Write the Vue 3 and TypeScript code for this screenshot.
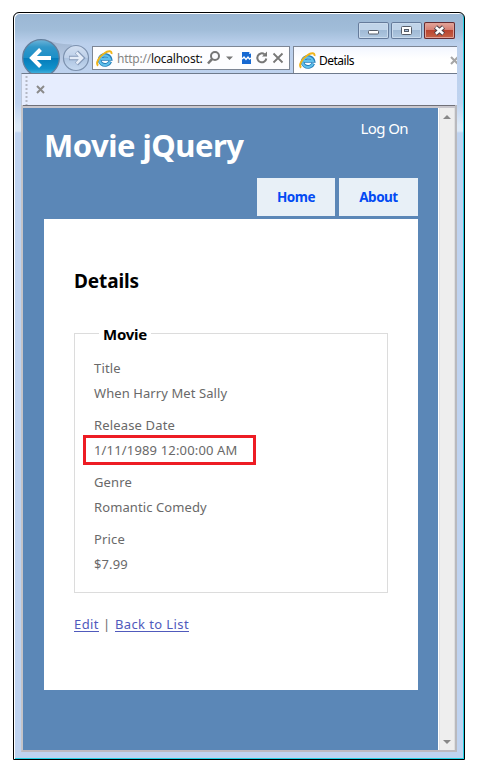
<script setup lang="ts">
interface Field {
  label: string
  value: string
  key: string
}

const fields: Field[] = [
  { key: 'title', label: 'Title', value: 'When Harry Met Sally' },
  { key: 'date', label: 'Release Date', value: '1/11/1989 12:00:00 AM' },
  { key: 'genre', label: 'Genre', value: 'Romantic Comedy' },
  { key: 'price', label: 'Price', value: '$7.99' },
]
const menu: string[] = ['Home', 'About']
</script>

<template>
  <div class="window">
    <div class="caption">
      <span class="cap-btn">
        <svg width="31" height="17"><rect x="10.5" y="8.5" width="10" height="3.5" rx="1" fill="#fff" stroke="#555c68" /></svg>
      </span>
      <span class="cap-btn">
        <svg width="31" height="17"><rect x="10.5" y="4.500" width="10" height="8" rx="1" fill="#fff" stroke="#555c68" /><rect x="13.500" y="7.500" width="4" height="2" fill="#a9bfdb" stroke="#555c68" /></svg>
      </span>
      <span class="cap-btn close">
        <svg width="31" height="17"><path d="M11.500 5l8 7M19.500 5l-8 7" stroke="#4b4048" stroke-width="4.600" /><path d="M11.800 5.300l7.400 6.400M19.200 5.300l-7.400 6.400" stroke="#fff" stroke-width="2.500" /></svg>
      </span>
    </div>

    <div class="navbar">
      <svg class="nav-buttons" width="71" height="36" viewBox="0 0 71 36">
        <defs>
          <linearGradient id="back" x1="0" y1="0" x2="0" y2="1">
            <stop offset="0" stop-color="#6db3d8" />
            <stop offset=".2" stop-color="#3197c9" />
            <stop offset=".5" stop-color="#1c8fc7" />
            <stop offset=".51" stop-color="#057cba" />
            <stop offset=".8" stop-color="#1192cb" />
            <stop offset="1" stop-color="#65c4e8" />
          </linearGradient>
          <linearGradient id="fwd" x1="0" y1="0" x2="0" y2="1">
            <stop offset="0" stop-color="#d2dff1" />
            <stop offset=".5" stop-color="#bed0e9" />
            <stop offset=".51" stop-color="#adc4e1" />
            <stop offset="1" stop-color="#c7daf1" />
          </linearGradient>
          <linearGradient id="bridge" x1="0" y1="0" x2="0" y2="1">
            <stop offset="0" stop-color="#9fb5d0" />
            <stop offset="1" stop-color="#bfd0ea" />
          </linearGradient>
        </defs>
        <path d="M24 2q10 5 27 5.500l-6 20H30z" fill="url(#bridge)" />
        <circle cx="20" cy="21" r="18.300" fill="url(#back)" stroke="#647f9d" stroke-width="1.300" />
        <path d="M30 21H11.500M19.500 12.500L11 21l8.500 8.500" fill="none" stroke="#fff" stroke-width="4" />
        <circle cx="55" cy="21" r="12.500" fill="url(#fwd)" stroke="#7c91ae" stroke-width="1.200" />
        <path d="M48 21h13M55.500 15l6 6-6 6" fill="none" stroke="#8499b8" stroke-width="4.400" />
        <path d="M48.700 21h12M55.500 15.500l5.500 5.500-5.500 5.500" fill="none" stroke="#e4ecf8" stroke-width="2.600" />
      </svg>
      <div class="address">
        <svg class="ie" width="17" height="17" viewBox="0 0 17 17">
          <path d="M14.300 11.500A5.500 5 0 1 1 14.500 9H5" fill="none" stroke="#247db9" stroke-width="3.600" />
          <path d="M14 11.500A5.300 4.800 0 1 1 14 9H5" fill="none" stroke="#5fc0ec" stroke-width="2.100" />
          <path d="M2.200 15.600C-.8 13.500 3 6.800 8 3.500c4-2.900 8-3.200 7.500.5" fill="none" stroke="#efb41a" stroke-width="1.900" />
        </svg>
        <span class="url"><i>http://</i>localhost:</span>
        <svg class="tools" width="80" height="18" viewBox="0 0 80 18">
          <g fill="none" stroke="#777" stroke-width="2">
            <circle cx="8" cy="7" r="4" />
            <path d="M5 10.200L1 14.500" stroke-width="2.500" />
            <path d="M57.500 5.200A4.500 4.500 0 1 0 59.300 9.500" />
            <path d="M66.500 4.500l9 9M75.500 4.500l-9 9" stroke-width="1.800" />
          </g>
          <path d="M60 2.500v5h-5zM19 7.500h7l-3.500 3.500z" fill="#777" />
          <path d="M35 3h7l2 2v10h-9z" fill="#1769d2" />
          <path d="M42 3v2h2z" fill="#b6d7ff" />
          <path d="M35 10l2-2 2 2.500 2-2.500 1.500 2L44 9" fill="none" stroke="#fff" stroke-width="1.300" />
        </svg>
      </div>
      <div class="tab">
        <svg class="ie" width="17" height="17" viewBox="0 0 17 17">
          <path d="M14.300 11.500A5.500 5 0 1 1 14.500 9H5" fill="none" stroke="#247db9" stroke-width="3.600" />
          <path d="M14 11.500A5.300 4.800 0 1 1 14 9H5" fill="none" stroke="#5fc0ec" stroke-width="2.100" />
          <path d="M2.200 15.600C-.8 13.500 3 6.800 8 3.500c4-2.900 8-3.200 7.500.5" fill="none" stroke="#efb41a" stroke-width="1.900" />
        </svg>
        <span class="tab-title">Details</span>
        <svg class="tab-close" width="7" height="9"><path d="M1 1l7 7M8 1L1 8" stroke="#a5a5a5" stroke-width="2" /></svg>
      </div>
    </div>

    <div class="toolbar">
      <svg width="30" height="31">
        <path d="M4.500 2v29" stroke="#b4b8c4" stroke-width="2" stroke-dasharray="2 2" />
        <path d="M15 12l7 7M22 12l-7 7" stroke="#8b8b8b" stroke-width="2" />
      </svg>
    </div>

    <div class="viewport">
      <div class="page">
        <header>
          <h1>Movie jQuery</h1>
          <a class="logon">Log On</a>
        </header>
        <nav>
          <a v-for="item in menu" :key="item">{{ item }}</a>
        </nav>
        <main>
          <h2>Details</h2>
          <section class="fieldset">
            <h3>Movie</h3>
            <dl>
              <template v-for="field in fields" :key="field.key">
                <dt>{{ field.label }}</dt>
                <dd :class="[field.key, { marked: field.key === 'date' }]">{{ field.value }}</dd>
              </template>
            </dl>
          </section>
          <p class="links"><a>Edit</a><span>|</span><a>Back to List</a></p>
        </main>
      </div>
      <div class="scrollbar">
        <svg width="16" height="10"><path d="M4 7l4-4 4 4z" fill="#888" /></svg>
        <svg width="16" height="10"><path d="M4 3h8l-4 4z" fill="#888" /></svg>
      </div>
    </div>
  </div>
</template>

<style>
body {
  background: #fff;
}
</style>

<style scoped>
* {
  box-sizing: border-box;
}
svg {
  display: block;
  flex: none;
}
.window {
  width: 452px;
  height: 748px;
  margin: 12px 0 0 13px;
  border: 1px solid #000;
  border-radius: 6px 6px 0 0;
  padding: 0 7px 6px 7px;
  background: linear-gradient(#9ab6d3 0, #a1bdd9 17px, #bbd0ec 31px, #bfd3f0 90px, #dce9f7 112px, #dce9f7 118px, #bfd3f0 120px);
  box-shadow: inset 1px 1px #fff, inset -1px -1px #22d0e4;
  font-family: "Noto Sans", sans-serif;
  white-space: nowrap;
}
.caption {
  height: 24px;
  padding: 9px 2px 0 0;
  display: flex;
  justify-content: flex-end;
  gap: 2px;
}
.cap-btn {
  width: 31px;
  height: 17px;
  border-radius: 2px;
  background: linear-gradient(#c0d4e9 0 45%, #9fb9d5 47%, #b2cae2);
  box-shadow: inset 0 0 0 1px #657b9b, inset 0 0 0 2px #cadbed;
}
.close {
  background: linear-gradient(#e4aaa0 0, #d68074 45%, #b9432f 48%, #c86749);
  box-shadow: inset 0 0 0 1px #622b32, inset 0 0 0 2px #e0a196;
}
.navbar {
  height: 36px;
  display: flex;
  align-items: flex-start;
}
.address {
  width: 198px;
  height: 24px;
  margin-top: 9px;
  border: 1px solid #7d8695;
  background: #fdfdff;
  display: flex;
  align-items: center;
}
.address .ie {
  margin-left: 3px;
}
.url {
  flex: none;
  width: 86px;
  margin-left: 4px;
  font-size: 12px;
  letter-spacing: -0.24px;
  color: #111;
}
.url i {
  color: #858585;
  font-style: normal;
}
.tools {
  margin-left: 4px;
}
.tab {
  flex: 1;
  height: 27px;
  margin: 9px 0 0 3px;
  border: 1px solid #7d8695;
  border-right: 0;
  border-bottom: 0;
  background: linear-gradient(#f2f6ff, #fff 45%);
  display: flex;
  align-items: center;
}
.tab .ie {
  margin-left: 5px;
}
.tab-title {
  margin-left: 3px;
  font-size: 12px;
  letter-spacing: -0.5px;
}
.tab-close {
  margin-left: auto;
}
.toolbar {
  height: 32px;
  border-top: 1px solid #6e7a8c;
  border-left: 1px solid #bcc7da;
  background: #e6edfe;
}
.viewport {
  height: 647px;
  border: 2px solid #c5c4c8;
  border-top: 0;
  border-right-color: #b9b9bd;
  border-bottom-color: #bdb9bf;
  background: #5b87b7;
  display: flex;
  padding-top: 3px;
  box-shadow: inset 0 1px #707078, inset 0 3px #c9c7cd;
}
.page {
  flex: none;
  width: 415px;
  padding: 0 20px 0 21px;
}
header {
  height: 70px;
  display: flex;
  justify-content: space-between;
  color: #fff;
}
h1 {
  margin: 13px 0 0;
  font-size: 31px;
  line-height: 48px;
  letter-spacing: -0.5px;
}
.logon {
  margin: 9px 10px 0 0;
  font-size: 15px;
  line-height: 22px;
  letter-spacing: -0.6px;
}
nav {
  height: 41px;
  display: flex;
  justify-content: flex-end;
  gap: 4px;
}
nav a {
  width: 78px;
  height: 38px;
  background: #e8f0f7;
  color: #034af3;
  font-size: 13.5px;
  line-height: 38px;
  font-weight: 700;
  letter-spacing: -0.5px;
  text-align: center;
}
nav a:last-child {
  width: 79px;
}
main {
  height: 471px;
  padding: 47px 30px 0;
  background: #fff;
  color: #696969;
  font-size: 13px;
  letter-spacing: 0.16px;
}
h2 {
  margin: 0;
  height: 67px;
  font-size: 19px;
  line-height: 30px;
  letter-spacing: -0.1px;
  color: #000;
}
.fieldset {
  height: 260px;
  border: 1px solid #dcdcdc;
  padding-left: 19px;
}
h3 {
  width: 52px;
  height: 20px;
  margin: -10px 0 0 5px;
  padding-left: 4px;
  background: #fff;
  color: #000;
  font-size: 15px;
  line-height: 20px;
  letter-spacing: -0.25px;
}
dl {
  margin: 12px 0 0;
}
dt {
  height: 25px;
  line-height: 25px;
}
dd {
  height: 25px;
  margin: 0 0 7px;
  line-height: 25px;
}
.title {
  letter-spacing: 0.08px;
}
.genre,
.price {
  letter-spacing: 0.1px;
}
.marked {
  width: 173px;
  height: 30px;
  margin: -3px 0 5px -11px;
  padding-left: 8px;
  border: 3px solid #ed1c24;
  line-height: 25px;
}
.links {
  display: flex;
  margin: 21px 0 0;
  line-height: 20px;
  letter-spacing: 0.4px;
}
.links span {
  width: 16px;
  text-align: center;
}
.links a {
  height: 18px;
  border-bottom: 1px solid #505abc;
  color: #505abc;
}
.scrollbar {
  flex: 1;
  background: #eee;
  border-left: 1px solid #fff;
  box-shadow: inset 1px 0 #e2e2e4, inset -1px 0 #dedfe0;
  display: flex;
  flex-direction: column;
  justify-content: space-between;
  padding: 4px 0 3px;
}
</style>
